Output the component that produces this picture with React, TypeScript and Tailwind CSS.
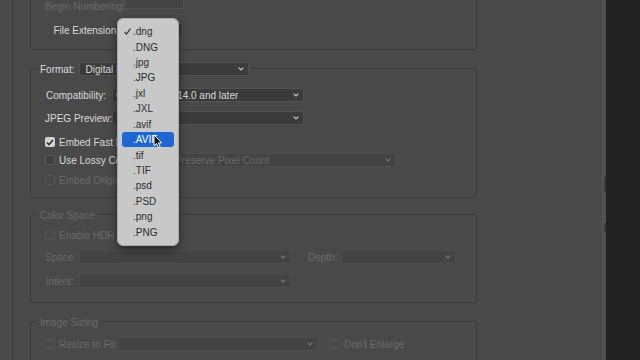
import clsx from 'clsx'

const font = { fontFamily: '"Liberation Sans", Arial, sans-serif' }

function Chevron({ dim }: { dim?: boolean }) {
    return (
        <svg width="6" height="4" viewBox="0 0 6 4" className="shrink-0">
            <path d="M0.6 0.6 L3 3 L5.4 0.6" fill="none" stroke={dim ? '#777' : '#c8c8c8'} strokeWidth="1.1" />
        </svg>
    )
}

function Select({ text, disabled, className }: { text?: string; disabled?: boolean; className: string }) {
    return (
        <div
            className={clsx(
                'flex items-center justify-between h-[14px] rounded-[2px] border pr-[4px] shrink-0',
                disabled ? 'bg-[#434343] border-[#4d4d4d] text-[#6a6a6a]' : 'bg-[#3b3b3b] border-[#525252] text-[#d9d9d9]',
                className
            )}
        >
            <span className="whitespace-nowrap overflow-hidden">{text}</span>
            <Chevron dim={disabled} />
        </div>
    )
}

function Checkbox({ state }: { state: 'on' | 'off' | 'disabled' }) {
    if (state === 'on') {
        return (
            <div className="w-[10px] h-[10px] rounded-[2px] bg-[#d2d2d2] flex items-center justify-center shrink-0">
                <svg width="8" height="7" viewBox="0 0 8 7">
                    <path d="M1 3.6 L3 5.6 L7 1" fill="none" stroke="#2e2e2e" strokeWidth="1.5" />
                </svg>
            </div>
        )
    }
    return (
        <div
            className={clsx(
                'w-[10px] h-[10px] rounded-[2px] border shrink-0',
                state === 'off' ? 'bg-[#3e3e3e] border-[#5c5c5c]' : 'border-[#555555]'
            )}
        />
    )
}

function Legend({ children }: { children: React.ReactNode }) {
    return <div className="-mt-[8px] ml-[7px] w-fit px-[2px] bg-[#494949] h-[16px] flex items-center gap-[5px]">{children}</div>
}

const extensions = ['.dng', '.DNG', '.jpg', '.JPG', '.jxl', '.JXL', '.avif', '.AVIF', '.tif', '.TIF', '.psd', '.PSD', '.png', '.PNG']

export default function App() {
    return (
        <div className="relative w-[640px] h-[360px] overflow-hidden flex bg-[#232323] text-[10px] text-[#d9d9d9]" style={font}>
            {/* Dialog */}
            <div className="w-[606px] h-full bg-[#494949] flex">
                <div className="w-[13px] h-full border-r border-[#3b3b3b]" />

                <div className="flex-1 pl-[17px] flex flex-col">
                    {/* Naming group (scrolled) */}
                    <div className="-mt-[31px] h-[81px] w-[447px] shrink-0 border border-[#3a3a3a] rounded-[3px] pt-[26px] flex flex-col gap-[4px]">
                        <div className="h-[20px] flex items-center pl-[14px]">
                            <span className="w-[74px] text-right text-[#6a6a6a] whitespace-nowrap">Begin Numbering:</span>
                            <div className="ml-[5px] w-[60px] h-[14px] -mt-[8px] bg-[#444444] border border-[#515151]" />
                        </div>
                        <div className="h-[20px] flex items-center pl-[14px]">
                            <span className="w-[74px] text-right whitespace-nowrap">File Extension:</span>
                            <Select className="ml-[2px] w-[62px] pl-[5px]" text=".dng" />
                        </div>
                    </div>

                    {/* Format group */}
                    <div className="mt-[18px] h-[130px] w-[447px] shrink-0 border border-[#3a3a3a] rounded-[3px] flex flex-col">
                        <Legend>
                            <span>Format:</span>
                            <Select className="w-[170px] pl-[5px]" text="Digital Negative" />
                        </Legend>
                        <div className="mt-[8px] h-[20px] flex items-center pl-[14px]">
                            <span className="w-[61px] text-right whitespace-nowrap">Compatibility:</span>
                            <Select className="ml-[6px] w-[192px] pl-[3px]" text="Camera Raw 14.0 and later" />
                        </div>
                        <div className="mt-[3px] h-[20px] flex items-center pl-[14px]">
                            <span className="w-[61px] text-right whitespace-nowrap">JPEG Preview:</span>
                            <Select className="ml-[6px] w-[192px] pl-[5px]" text="Medium Size" />
                        </div>
                        <div className="mt-[5px] h-[18px] flex items-center pl-[14px] gap-[4px]">
                            <Checkbox state="on" />
                            <span>Embed Fast Load Data</span>
                        </div>
                        <div className="h-[18px] flex items-center pl-[14px]">
                            <Checkbox state="off" />
                            <span className="ml-[4px] whitespace-nowrap">Use Lossy Compression:</span>
                            <Select className="ml-[2px] w-[224px] pl-[2px]" text="Preserve Pixel Count" disabled />
                        </div>
                        <div className="mt-[2px] h-[18px] flex items-center pl-[14px] gap-[4px] text-[#6a6a6a]">
                            <Checkbox state="disabled" />
                            <span>Embed Original Raw File</span>
                        </div>
                    </div>

                    {/* Color Space group */}
                    <div className="mt-[16px] h-[89px] w-[447px] shrink-0 border border-[#3a3a3a] rounded-[3px] flex flex-col text-[#6a6a6a]">
                        <Legend>
                            <span>Color Space</span>
                        </Legend>
                        <div className="mt-[3px] h-[18px] flex items-center pl-[14px] gap-[4px]">
                            <Checkbox state="disabled" />
                            <span>Enable HDR Display</span>
                        </div>
                        <div className="mt-[3px] h-[20px] flex items-center pl-[14px]">
                            <span className="w-[34px]">Space:</span>
                            <Select className="w-[212px] pl-[5px]" disabled />
                            <span className="ml-[17px] w-[33px]">Depth:</span>
                            <Select className="w-[115px] pl-[5px]" disabled />
                        </div>
                        <div className="mt-[4px] h-[20px] flex items-center pl-[15px]">
                            <span className="w-[33px]">Intent:</span>
                            <Select className="w-[212px] pl-[5px]" disabled />
                        </div>
                    </div>

                    {/* Image Sizing group */}
                    <div className="mt-[18px] h-[60px] w-[447px] shrink-0 border border-[#3a3a3a] rounded-[3px] flex flex-col text-[#6a6a6a]">
                        <Legend>
                            <span>Image Sizing</span>
                        </Legend>
                        <div className="mt-[4px] h-[20px] flex items-center pl-[13px]">
                            <Checkbox state="disabled" />
                            <span className="ml-[5px] w-[59px] whitespace-nowrap">Resize to Fit:</span>
                            <Select className="w-[200px] pl-[5px]" disabled />
                            <div className="ml-[12px]">
                                <Checkbox state="disabled" />
                            </div>
                            <span className="ml-[4px]">Don't Enlarge</span>
                        </div>
                    </div>
                </div>

                {/* Right edge */}
                <div className="w-[5px] h-full bg-[#525252] border-l border-[#4c4c4c] flex flex-col">
                    <div className="h-[177px]" />
                    <div className="h-[15px] ml-[2px] bg-[#3a3a3a]" />
                    <div className="h-[31px]" />
                    <div className="h-[9px] ml-[2px] bg-[#3a3a3a]" />
                </div>
            </div>

            {/* Extension popup menu */}
            <div className="absolute left-[117px] top-[18px] w-[62px] h-[228px] rounded-[6px] bg-[#c8c8c8] border border-[#a8a8a8] shadow-[0_4px_10px_rgba(0,0,0,0.45)] py-[5px] px-[4px] flex flex-col text-[#2c2c2c]">
                {extensions.map((ext) => {
                    const active = ext === '.AVIF'
                    return (
                        <div
                            key={ext}
                            className={clsx('h-[15.6px] flex items-center rounded-[3px] pl-[2px]', active && 'bg-[#1d67d5] text-white')}
                        >
                            <span className="w-[9px] flex items-center">
                                {ext === '.dng' && (
                                    <svg width="7" height="7" viewBox="0 0 7 7">
                                        <path d="M0.6 3.8 L2.5 6 L6.4 0.6" fill="none" stroke="#2c2c2c" strokeWidth="1.1" />
                                    </svg>
                                )}
                            </span>
                            <span>{ext}</span>
                        </div>
                    )
                })}
            </div>

            {/* Mouse pointer */}
            <svg className="absolute left-[153px] top-[134px]" width="10" height="15" viewBox="0 0 10 15">
                <path d="M1 1 L1 12 L3.6 9.6 L5.4 13.6 L7.2 12.8 L5.4 8.9 L8.8 8.9 Z" fill="#111" stroke="#fff" strokeWidth="1" strokeLinejoin="round" />
            </svg>
        </div>
    )
}
